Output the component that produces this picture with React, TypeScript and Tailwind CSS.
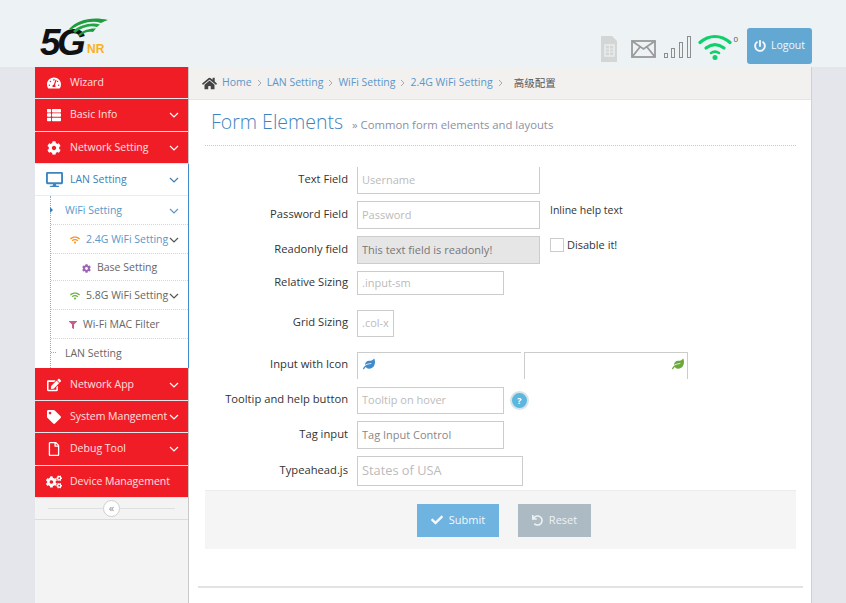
import React from "react";
import {
  FaCheck,
  FaCog,
  FaCogs,
  FaDesktop,
  FaEdit,
  FaFilter,
  FaHome,
  FaLeaf,
  FaPowerOff,
  FaRegFile,
  FaTachometerAlt,
  FaTag,
  FaThList,
  FaUndo,
  FaWifi,
} from "react-icons/fa";

const Chevron: React.FC<{ className?: string }> = ({ className = "" }) => (
  <svg width="10" height="6" viewBox="0 0 10 6" fill="none" stroke="currentColor" strokeWidth="1.2" className={className}>
    <path d="M1 1l4 4 4-4" />
  </svg>
);

// red top level entries of the sidebar
const RedItem: React.FC<{ icon: React.ReactNode; label: string; arrow?: boolean; h: string; iconCls?: string }> = ({ icon, label, arrow = true, h, iconCls = "text-[14px]" }) => (
  <div className={`${h} flex items-center bg-[#f01d26] text-[#ffe0e0] text-[10.500px] mb-px`}>
    <span className={`w-[35px] flex justify-center pl-[2px] text-white ${iconCls}`}>{icon}</span>
    <span className="flex-1 whitespace-nowrap">{label}</span>
    {arrow && <Chevron className="mr-[9px] text-white" />}
  </div>
);

const SubItem: React.FC<{ children: React.ReactNode; h: string; border?: boolean; className?: string }> = ({ children, h, border = true, className = "" }) => (
  <div className={`${h} flex items-center relative ${border ? "border-b border-dotted border-[#d5d5d5] pt-[2px]" : ""} ${className}`}>
    {children}
  </div>
);

const Sidebar: React.FC = () => (
  <aside className="w-[154px] shrink-0 border-r border-[#c9c9c9] flex flex-col">
    <RedItem h="h-[31px]" icon={<FaTachometerAlt />} label="Wizard" arrow={false} />
    <RedItem h="h-[32px]" icon={<FaThList />} label="Basic Info" />
    <RedItem h="h-[31px]" icon={<FaCog />} label="Network Setting" />

    <div className="bg-white border-r border-[#428bca] mr-[-1px] text-[10.500px]">
      <div className="h-[32px] flex items-center border-b border-[#ececec] text-[#3d7fb5]">
        <span className="w-[35px] flex justify-center pl-[3px] text-[#3d85c0] text-[17px]"><FaDesktop /></span>
        <span className="flex-1">LAN Setting</span>
        <Chevron className="mr-[9px]" />
      </div>
      <div className="ml-[15px] border-l border-dotted border-[#7fb0d6]">
        <SubItem h="h-[29px]" className="text-[#5b97c9] pl-[14px]">
          <span className="absolute left-[-1px] top-[11px] w-0 h-0 border-y-[3px] border-y-transparent border-l-[3px] border-l-[#3d7fb5]" />
          <span className="flex-1">WiFi Setting</span>
          <Chevron className="mr-[9px]" />
        </SubItem>
        <SubItem h="h-[29px]" className="text-[#5b97c9] pl-[19px]">
          <FaWifi className="text-[#f7941d] text-[10px] mr-[6px]" />
          <span className="whitespace-nowrap">2.4G WiFi Setting</span>
          <Chevron className="ml-[1px] text-[#555]" />
        </SubItem>
        <SubItem h="h-[27px]" className="text-[#666] pl-[31px]">
          <FaCog className="text-[#9a63b5] text-[9px] mr-[6px]" />
          <span>Base Setting</span>
        </SubItem>
        <SubItem h="h-[29px]" className="text-[#666] pl-[19px]">
          <FaWifi className="text-[#6cb33f] text-[10px] mr-[6px]" />
          <span className="whitespace-nowrap">5.8G WiFi Setting</span>
          <Chevron className="ml-[1px] text-[#555]" />
        </SubItem>
        <SubItem h="h-[29px]" className="text-[#666] pl-[18px]">
          <FaFilter className="text-[#c0608f] text-[8px] mr-[6px]" />
          <span>Wi-Fi MAC Filter</span>
        </SubItem>
        <SubItem h="h-[29px]" border={false} className="text-[#666] pl-[14px]">
          <span className="absolute left-0 top-[13px] w-[5px] border-t border-dotted border-[#7fb0d6]" />
          <span>LAN Setting</span>
        </SubItem>
      </div>
    </div>

    <RedItem h="h-[32px] pt-[2px]" icon={<FaEdit />} label="Network App" />
    <RedItem h="h-[31px]" icon={<FaTag />} label="System Mangement" />
    <RedItem h="h-[32px]" icon={<FaRegFile />} label="Debug Tool" />
    <RedItem h="h-[31px]" icon={<FaCogs />} label="Device Management" arrow={false} iconCls="text-[16px]" />

    <div className="h-[22px] bg-[#f3f3f3] border-b border-[#dcdcdc] flex items-center px-[13px]">
      <div className="flex-1 border-t border-[#dfdfdf]" />
      <div className="w-[17px] h-[17px] rounded-full bg-white border border-[#cfcfcf] text-[#8f8f8f] text-[11px] leading-[13px] text-center">«</div>
      <div className="flex-1 border-t border-[#dfdfdf]" />
    </div>
    <div className="flex-1 bg-[#f3f3f3]" />
  </aside>
);

const Crumb: React.FC<{ label: string }> = ({ label }) => (
  <>
    <span className="text-[#5b97c9]">{label}</span>
    <span className="text-[#aaa] mx-[5px]">
      <svg width="5" height="8" viewBox="0 0 5 8" fill="none" stroke="currentColor"><path d="M1 1l3 3-3 3" /></svg>
    </span>
  </>
);

const Row: React.FC<{ label: string; className: string; children: React.ReactNode }> = ({ label, className, children }) => (
  <div className={`flex items-center ${className}`}>
    <label className="w-[143px] shrink-0 text-right text-[11.200px] text-[#333] mr-[9px] mb-[2px] whitespace-nowrap">{label}</label>
    {children}
  </div>
);

const inputCls = "h-full border border-[#ccc] px-[4px] pb-[2px] text-[11px] outline-none";

const App: React.FC = () => (
  <div className="h-screen overflow-hidden flex flex-col bg-[#e4e6eb] font-['Open_Sans',sans-serif]">
    <header className="h-[67px] shrink-0 bg-[#edf2f5] flex">
      <div className="relative w-[110px] ml-[40px] h-full">
        <span className="absolute left-0 top-[22px] text-[37px] leading-[42px] font-bold italic text-[#111] tracking-[-3.500px] font-['Liberation_Sans',sans-serif]">5G</span>
        <span className="absolute left-[47px] top-[42px] text-[12px] leading-[14px] font-bold text-[#f9b122] font-['Liberation_Sans',sans-serif]">NR</span>
        <svg width="40" height="22" viewBox="0 0 40 22" className="absolute left-[28px] top-[16px]">
          <path d="M1 13C9 4 24 0 40 4 37 5 35 6 33 7 24 4 12 7 3 14z" fill="#1e9b3d" />
          <path d="M5 15C12 9 23 6 32 8.500L29 11C22 9 14 11 7 17z" fill="#23a445" />
          <path d="M10 19C15 14 22 12 28 12.500L25 16C21 15 16 16 12 20z" fill="#1e9b3d" />
        </svg>
      </div>
      <div className="flex-1 flex justify-end items-end pr-[34px] pb-[3px]">
        <svg width="18" height="26" viewBox="0 0 18 26" className="mr-[13px] mb-[2px]">
          <path d="M1 0h11l5 5v21H1z" fill="#d4d6d6" />
          <rect x="5" y="9" width="9" height="11" fill="none" stroke="#eaecec" strokeWidth="1.5" />
          <path d="M5 13h9M5 16h9M9.500 9v11" stroke="#eaecec" />
        </svg>
        <svg width="25" height="18" viewBox="0 0 25 18" fill="none" stroke="#9a9a9a" strokeWidth="1.8" className="mr-[8px] mb-[6px]">
          <rect x="1" y="1" width="23" height="16" />
          <path d="M1 1l11.500 8 11.500-8M1 17l8-10M24 17l-8-10" />
        </svg>
        <svg width="27" height="23" viewBox="0 0 27 23" fill="none" stroke="#8d8d8d" className="mr-[7px] mb-[5px]">
          <rect x="0.500" y="17.500" width="3" height="4" />
          <rect x="7.500" y="12.500" width="3" height="9" />
          <rect x="15.500" y="6.500" width="3" height="15" />
          <rect x="23.500" y="0.500" width="3" height="21" />
        </svg>
        <svg width="36" height="27" viewBox="0 0 36 27" fill="none" stroke="#0fd06a" strokeWidth="3.2" strokeLinecap="round" className="mb-[4px]">
          <path d="M2 9.500C11 1.500 23 1.500 32 9.500" />
          <path d="M8 15c6-4.500 12-4.500 18 0" />
          <path d="M13 20c3-2 5-2 8 0" strokeWidth="2.600" />
          <circle cx="17" cy="24.500" r="2.500" fill="#0fd06a" stroke="none" />
        </svg>
        <span className="text-[8px] leading-[8px] text-[#555] self-start mt-[35px] mr-[9px] ml-[-1px]">0</span>
        <button className="w-[65px] h-[36px] rounded-[3px] bg-[#63a7d3] text-[#f2f7fb] text-[10.500px] flex items-center justify-center gap-[5px]">
          <FaPowerOff className="text-[12px]" />
          Logout
        </button>
      </div>
    </header>

    <div className="flex-1 flex ml-[35px] min-h-0">
      <Sidebar />
      <main className="w-[623px] shrink-0 bg-white border-r border-[#cfd0d3] flex flex-col">
        <div className="h-[33px] shrink-0 bg-[#f3f0f0] border-b border-[#e6e4e4] flex items-center pl-[13px] text-[10.500px]">
          <FaHome className="text-[#444] text-[15px] mr-[5px]" />
          <Crumb label="Home" />
          <Crumb label="LAN Setting" />
          <Crumb label="WiFi Setting" />
          <Crumb label="2.4G WiFi Setting" />
          <span className="ml-[6px] text-[#555] font-['Noto_Sans_CJK_SC',sans-serif]">高级配置</span>
        </div>

        <div className="ml-[16px] mr-[15px] flex flex-col">
          <div className="h-[46px] border-b border-dotted border-[#c9c9c9] flex items-baseline pl-[6px] pt-[8px]">
            <h1 className="text-[19.500px] font-light text-[#3d85c0] leading-[27px]">Form Elements</h1>
            <span className="ml-[9px] text-[11.300px] text-[#8c8fa3]">» Common form elements and layouts</span>
          </div>

          <Row label="Text Field" className="h-[27px] mt-[21px]">
            <input placeholder="Username" className={`${inputCls} w-[183px] border-t-0 bg-white placeholder:text-[#bbb]`} />
          </Row>
          <Row label="Password Field" className="h-[28px] mt-[7px]">
            <input placeholder="Password" className={`${inputCls} w-[183px] bg-white placeholder:text-[#bbb]`} />
            <span className="ml-[10px] text-[10.500px] text-[#333] mb-[8px]">Inline help text</span>
          </Row>
          <Row label="Readonly field" className="h-[28px] mt-[7px]">
            <input readOnly value="This text field is readonly!" className={`${inputCls} w-[183px] bg-[#e6e6e6] text-[#777]`} />
            <span className="ml-[10px] w-[14px] h-[14px] border border-[#ccc] bg-white mb-[10px]" />
            <span className="ml-[3px] text-[11px] text-[#333] mb-[10px]">Disable it!</span>
          </Row>
          <Row label="Relative Sizing" className="h-[24px] mt-[7px]">
            <input placeholder=".input-sm" className={`${inputCls} w-[147px] bg-white placeholder:text-[#bbb]`} />
          </Row>
          <Row label="Grid Sizing" className="h-[27px] mt-[15px]">
            <input placeholder=".col-x" className={`${inputCls} w-[37px] bg-white placeholder:text-[#bbb]`} />
          </Row>
          <Row label="Input with Icon" className="h-[27px] mt-[15px]">
            <div className="relative w-[164px] h-full border-l border-t border-[#ccc]">
              <FaLeaf className="absolute left-[5px] top-[5px] text-[#428bca] text-[12px]" />
            </div>
            <div className="relative w-[164px] h-full border border-b-0 border-[#ccc] ml-[3px]">
              <FaLeaf className="absolute right-[3px] top-[5px] text-[#6ca83c] text-[12px]" />
            </div>
          </Row>
          <Row label="Tooltip and help button" className="h-[27px] mt-[8px]">
            <input placeholder="Tooltip on hover" className={`${inputCls} w-[147px] bg-white placeholder:text-[#bbb]`} />
            <span className="ml-[6px] w-[19px] h-[19px] rounded-full bg-[#5bb7de] border-2 border-[#d5e3ea] text-white text-[9px] font-bold flex items-center justify-center">?</span>
          </Row>
          <Row label="Tag input" className="h-[28px] mt-[7px]">
            <input placeholder="Tag Input Control" className={`${inputCls} w-[147px] bg-white placeholder:text-[#888]`} />
          </Row>
          <Row label="Typeahead.js" className="h-[30px] mt-[7px]">
            <input placeholder="States of USA" className={`${inputCls} w-[166px] bg-white text-[12.800px] placeholder:text-[#bbb]`} />
          </Row>

          <div className="mt-[4px] h-[59px] bg-[#f5f5f5] border-t border-[#ececec] flex justify-center items-center gap-[19px] pl-[7px]">
            <button className="w-[82px] h-[33px] bg-[#6fb3e0] text-[#f4f9fc] text-[11px] flex items-center justify-center gap-[6px]">
              <FaCheck className="text-[12px]" /> Submit
            </button>
            <button className="w-[73px] h-[33px] bg-[#abbac3] text-[#eef2f4] text-[11px] flex items-center justify-center gap-[6px]">
              <FaUndo className="text-[11px]" /> Reset
            </button>
          </div>
        </div>

        <div className="ml-[9px] mr-[8px] mt-[37px] border-t-2 border-[#e2e2e2]" />
      </main>
    </div>
  </div>
);

export default App;
